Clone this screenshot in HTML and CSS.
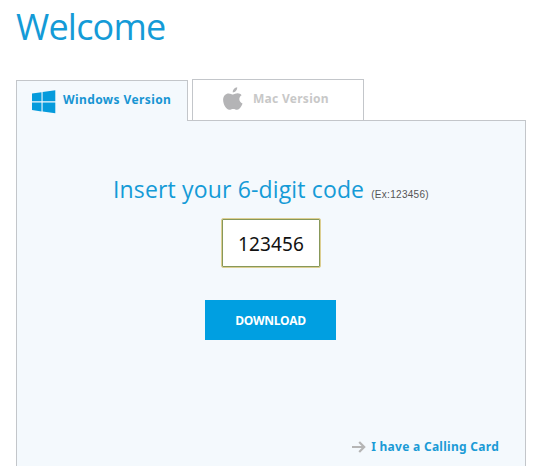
FILE: index.html
```html
<!DOCTYPE html>
<html lang="en">
<head>
<meta charset="utf-8">
<title>Welcome</title>
<link rel="stylesheet" href="styles.css">
</head>
<body>
<main class="page">
  <h1 class="title"><span>Welcome</span></h1>
  <nav class="tabs">
    <a class="tab tab-active">
      <svg class="icon-windows" width="24" height="24" viewBox="0 0 24 24"><path d="M0 3.6 9.5 2.2V11.3H0ZM10.6 2 23.3.2V11.3H10.6ZM0 12.4H9.5V21.4L0 20.1ZM10.6 12.4H23.3V23.3L10.6 21.6Z"/></svg>
      <span>Windows Version</span>
    </a>
    <a class="tab tab-mac">
      <svg class="icon-apple" width="20" height="24" viewBox="0 0 20 24"><path d="M14.2.3C14.4 3 12.3 5.4 9.8 5.4 9.5 3 11.8.6 14.2.3ZM18.6 8.2C15.3 10.2 15.7 14.8 19.5 16.5 18.5 19.5 16.4 22.7 14.2 22.8 12.7 22.8 12 22 10.2 22 8.4 22 7.6 22.8 6.3 22.8 3.3 22.8.1 17.5.1 12.8.1 8.7 2.7 6.4 5.6 6.4 7.4 6.4 8.9 7.5 10 7.5 11.1 7.5 12.8 6.3 14.7 6.3 16.2 6.3 17.7 7 18.6 8.2Z"/></svg>
      <span>Mac Version</span>
    </a>
  </nav>
  <section class="panel">
    <label class="prompt" for="code"><span class="prompt-text">Insert your 6-digit code</span><span class="hint">(Ex:123456)</span></label>
    <input class="code" id="code" type="text" maxlength="6" value="123456">
    <button class="download" type="button">DOWNLOAD</button>
    <a class="calling"><svg width="14" height="12" viewBox="0 0 14 12"><path d="M0 6H12M7.2 1 12.2 6 7.2 11"/></svg><span>I have a Calling Card</span></a>
  </section>
</main>
</body>
</html>
```
FILE: styles.css
```css
* { box-sizing: border-box; }
body {
  margin: 0;
  background: #fff;
  overflow: hidden;
  font-family: "Noto Sans", "Open Sans", sans-serif;
}
.page {
  width: 510px;
  height: 466px;
  margin-left: 16px;
  display: flex;
  flex-direction: column;
}
.title {
  margin: 0;
  height: 79px;
  font-family: "Open Sans", sans-serif;
  font-size: 36px;
  font-weight: 400;
  line-height: 53px;
  letter-spacing: -0.8px;
  color: #149bd7;
}
.tabs {
  display: flex;
  align-items: flex-end;
  gap: 4px;
  height: 42px;
  margin-bottom: -1px;
  z-index: 1;
}
.tab {
  display: flex;
  width: 172px;
  border: 1px solid #c3c6ca;
  border-bottom: 0;
  font-size: 12px;
  font-weight: 700;
  line-height: 16px;
  letter-spacing: 0.4px;
}
.tab-active {
  height: 41px;
  padding: 9px 0 0 15px;
  gap: 7px;
  background: #f4f9fd;
  color: #1795d3;
}
.tab-mac {
  height: 41px;
  margin-bottom: 1px;
  padding: 7px 0 0 30px;
  gap: 10px;
  background: #fff;
  color: #c8c8c8;
  letter-spacing: 0.28px;
}
.tab-active span { padding-top: 2px; }
.tab-mac span { padding-top: 4px; }
.icon-windows { fill: #059bdc; }
.icon-apple { fill: #b4b4b6; }
.panel {
  flex: 1;
  display: flex;
  flex-direction: column;
  align-items: center;
  border: 1px solid #c3c6ca;
  border-bottom: 0;
  background: #f4f9fd;
}
.prompt {
  display: flex;
  align-items: baseline;
  gap: 7px;
  height: 43px;
  margin-top: 54px;
  line-height: 28px;
  color: #149bd7;
  white-space: nowrap;
}
.prompt-text {
  font-family: "Open Sans", sans-serif;
  font-size: 23px;
  letter-spacing: 0.15px;
}
.hint {
  font-family: "Liberation Sans", sans-serif;
  font-size: 10px;
  letter-spacing: 0.3px;
  color: #555;
}
.code {
  width: 100px;
  height: 50px;
  padding: 2px 0 0;
  border: 1px solid #ddcf92;
  border-radius: 2px;
  outline: 0;
  background: #fff;
  box-shadow: inset 0 0 0 1px #87985a;
  font-family: "Noto Sans", sans-serif;
  font-size: 19px;
  letter-spacing: 0.1px;
  text-align: center;
  color: #111;
}
.download {
  width: 131px;
  height: 40px;
  margin: 32px 1px 0 0;
  padding: 0;
  border: 0;
  background: #009fe1;
  font-family: "Open Sans", sans-serif;
  font-size: 12px;
  font-weight: 700;
  letter-spacing: -0.35px;
  color: #fff;
}
.calling {
  display: flex;
  align-items: center;
  align-self: flex-end;
  gap: 5px;
  margin-top: 98px;
  margin-right: 26px;
  font-size: 12px;
  font-weight: 700;
  line-height: 16px;
  letter-spacing: 0.28px;
  color: #1b9bd6;
  white-space: nowrap;
}
.calling span { padding-top: 1px; }
.calling svg { fill: none; stroke: #b5b5b5; stroke-width: 2.2; }
```
